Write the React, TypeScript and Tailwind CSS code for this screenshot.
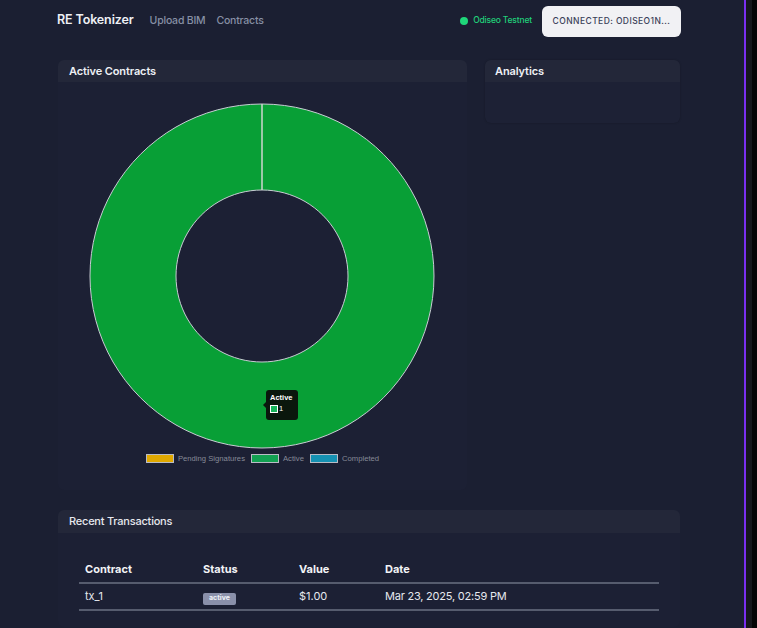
import React from "react";

function Donut() {
  const cx = 204;
  const cy = 22 + 172;
  const R = 172;
  const r = 86;
  const ring = `M ${cx} ${cy - R} A ${R} ${R} 0 1 1 ${cx - 0.01} ${cy - R} Z M ${cx} ${cy - r} A ${r} ${r} 0 1 0 ${cx + 0.01} ${cy - r} Z`;
  return (
    <svg width="409" height="372" className="block">
      <path d={ring} fill="#089f36" fillRule="evenodd" stroke="#c9ccd4" strokeWidth="1" />
      <line x1={cx} y1={cy - R} x2={cx} y2={cy - r} stroke="#cfd6d0" strokeWidth="1.5" />
    </svg>
  );
}

export default function App() {
  const sans = { fontFamily: "Inter, 'Noto Sans', sans-serif" };
  return (
    <div className="min-h-screen w-[757px] bg-[#1b1f32] flex" style={sans}>
      <main className="w-[744px] pl-[58px] pb-10">
        {/* Header */}
        <header className="w-[623px] h-[41px] flex items-center justify-between">
          <div className="flex items-center">
            <span className="text-[12.5px] font-semibold text-[#eef0f5] -ml-[1px] tracking-[-0.01em]">RE Tokenizer</span>
            <nav className="flex items-center gap-[11px] ml-[16px] text-[10.5px] text-[#8790a5] font-medium tracking-[-0.02em]">
              <span>Upload BIM</span>
              <span>Contracts</span>
            </nav>
          </div>
          <div className="flex items-center">
            <span className="w-[8px] h-[8px] rounded-full bg-[#1fd67a]" />
            <span className="ml-[5px] text-[8.5px] text-[#21d07a] font-medium tracking-[-0.02em]">Odiseo Testnet</span>
            <button className="ml-[10px] w-[139px] h-[31px] mt-[1px] rounded-[6px] bg-[#f1f1f4] text-[8.5px] tracking-[0.05em] text-[#3a4058] font-medium flex items-center justify-center">
              CONNECTED: ODISEO1N...
            </button>
          </div>
        </header>

        {/* Top grid */}
        <div className="mt-[19px] grid grid-cols-[409px_195px] gap-[18px] items-start">
          <section className="rounded-md bg-[#1c2034] h-[430px]">
            <div className="h-[22px] bg-[#232739] rounded-t-md flex items-center px-[11px]">
              <span className="text-[11px] font-semibold text-[#eef0f5] tracking-[-0.01em]">Active Contracts</span>
            </div>
            <div className="relative">
              <Donut />
              {/* tooltip */}
              <div className="absolute left-[208px] top-[308px] w-[32px] h-[30px] rounded-[3px] bg-[#0a170d] px-[4px] pt-[3px]" style={{ fontFamily: "'Liberation Sans', Arial, sans-serif" }}>
                <span className="absolute -left-[3px] top-[12px] w-0 h-0 border-y-[3px] border-y-transparent border-r-[3px] border-r-[#0a170d]" />
                <div className="text-[7.5px] font-bold text-white leading-[9px]">Active</div>
                <div className="flex items-center mt-[3px]">
                  <span className="w-[8px] h-[8px] bg-[#17b55b] border border-white" />
                  <span className="ml-[1px] text-[7.5px] text-white leading-none">1</span>
                </div>
              </div>
              {/* legend */}
              <div className="flex justify-center items-center gap-[6px] -mt-[1px] text-[7.7px] text-[#868a97]" style={{ fontFamily: "'Liberation Sans', Arial, sans-serif" }}>
                <div className="flex items-center gap-[4px]">
                  <span className="w-[28px] h-[9px] bg-[#e0a800] border border-[#b9bcc6]" />
                  <span>Pending Signatures</span>
                </div>
                <div className="flex items-center gap-[4px]">
                  <span className="w-[28px] h-[9px] bg-[#12a152] border border-[#b9bcc6]" />
                  <span>Active</span>
                </div>
                <div className="flex items-center gap-[4px]">
                  <span className="w-[28px] h-[9px] bg-[#1591b2] border border-[#b9bcc6]" />
                  <span>Completed</span>
                </div>
              </div>
            </div>
          </section>

          <section className="rounded-md bg-[#1d2135] h-[63px] shadow-[0_0_2px_rgba(0,0,0,0.25)]">
            <div className="h-[22px] bg-[#232739] rounded-t-md flex items-center px-[10px]">
              <span className="text-[11px] font-semibold text-[#eef0f5] tracking-[-0.01em]">Analytics</span>
            </div>
          </section>
        </div>

        {/* Recent transactions */}
        <section className="mt-[20px] w-[622px] rounded-md bg-[#1c2034]">
          <div className="h-[23px] bg-[#232739] rounded-t-md flex items-center px-[11px]">
            <span className="text-[11px] font-medium text-[#e6e8ee] tracking-[-0.02em]">Recent Transactions</span>
          </div>
          <div className="px-[21px] pt-[23px] pb-[16px]">
            <table className="w-[580px] border-collapse text-[11px]">
              <thead>
                <tr className="border-b-2 border-[#565c6e] h-[27px]">
                  <th className="w-[118px] text-left font-bold text-[#f2f3f6] px-[6px]">Contract</th>
                  <th className="w-[96px] text-left font-bold text-[#f2f3f6] px-[6px]">Status</th>
                  <th className="w-[86px] text-left font-bold text-[#f2f3f6] px-[6px]">Value</th>
                  <th className="text-left font-bold text-[#f2f3f6] px-[6px]">Date</th>
                </tr>
              </thead>
              <tbody>
                <tr className="border-b-2 border-[#565c6e] h-[27px]">
                  <td className="px-[6px] text-[#e6e8ee]">tx_1</td>
                  <td className="px-[6px]">
                    <span className="inline-flex items-center justify-center w-[33px] h-[12px] rounded-[2px] bg-[#8a90aa] text-[7px] font-bold text-[#eef0f6]">active</span>
                  </td>
                  <td className="px-[6px] text-[#e6e8ee]">$1.00</td>
                  <td className="px-[6px] text-[#e6e8ee] tracking-[-0.02em]">Mar 23, 2025, 02:59 PM</td>
                </tr>
              </tbody>
            </table>
          </div>
        </section>
      </main>
      <div className="w-[2px] bg-[#7b2ff0]" />
      <div className="w-[6px] bg-[#16171c]" />
      <div className="flex-1 bg-[#050506]" />
    </div>
  );
}
